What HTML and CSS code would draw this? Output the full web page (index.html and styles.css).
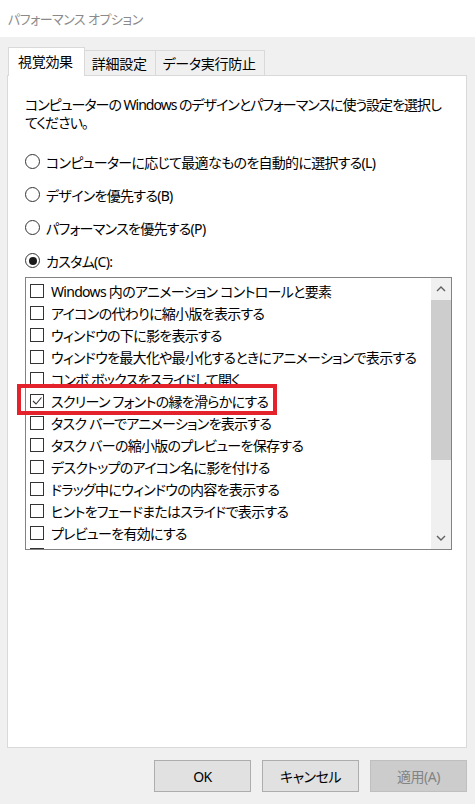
FILE: index.html
```html
<!DOCTYPE html>
<html lang="ja">
<head>
    <meta charset="UTF-8">
    <meta name="viewport" content="width=device-width, initial-scale=1.0">
    <title>パフォーマンス オプション</title>
    <link rel="stylesheet" href="styles.css">
</head>
<body>
    <div class="window">
        <div class="titlebar">パフォーマンス オプション</div>

        <!-- Pestañas -->
        <div class="tabs">
            <div class="tab active">視覚効果</div>
            <div class="tab">詳細設定</div>
            <div class="tab">データ実行防止</div>
        </div>

        <div class="panel">
            <p class="intro">コンピューターの Windows のデザインとパフォーマンスに使う設定を選択し<br>てください。</p>

            <div class="radio-group">
                <div class="radio"><span class="circle"></span>コンピューターに応じて最適なものを自動的に選択する(L)</div>
                <div class="radio"><span class="circle"></span>デザインを優先する(B)</div>
                <div class="radio"><span class="circle"></span>パフォーマンスを優先する(P)</div>
                <div class="radio"><span class="circle checked"></span>カスタム(C):</div>
            </div>

            <div class="listbox">
                <ul class="items">
                    <li><span class="box"></span>Windows 内のアニメーション コントロールと要素</li>
                    <li><span class="box"></span>アイコンの代わりに縮小版を表示する</li>
                    <li><span class="box"></span>ウィンドウの下に影を表示する</li>
                    <li><span class="box"></span>ウィンドウを最大化や最小化するときにアニメーションで表示する</li>
                    <li><span class="box"></span>コンボ ボックスをスライドして開く</li>
                    <li><span class="box">
                        <svg width="12" height="12" viewBox="0 0 12 12"><polyline points="2,6 5,9 10.5,2.5" fill="none" stroke="#333" stroke-width="1.1"/></svg>
                    </span>スクリーン フォントの縁を滑らかにする</li>
                    <li><span class="box"></span>タスク バーでアニメーションを表示する</li>
                    <li><span class="box"></span>タスク バーの縮小版のプレビューを保存する</li>
                    <li><span class="box"></span>デスクトップのアイコン名に影を付ける</li>
                    <li><span class="box"></span>ドラッグ中にウィンドウの内容を表示する</li>
                    <li><span class="box"></span>ヒントをフェードまたはスライドで表示する</li>
                    <li><span class="box"></span>プレビューを有効にする</li>
                    <li><span class="box"></span>マウス ポインターの下に影を表示する</li>
                </ul>
                <div class="scrollbar">
                    <div class="arrow">
                        <svg width="10" height="6" viewBox="0 0 10 6"><polyline points="1,5 5,1 9,5" fill="none" stroke="#606060" stroke-width="1.4"/></svg>
                    </div>
                    <div class="thumb"></div>
                    <div class="track"></div>
                    <div class="arrow">
                        <svg width="10" height="6" viewBox="0 0 10 6"><polyline points="1,1 5,5 9,1" fill="none" stroke="#606060" stroke-width="1.4"/></svg>
                    </div>
                </div>
            </div>

            <!-- Marco rojo de resaltado -->
            <div class="highlight"></div>
        </div>

        <div class="buttons">
            <button>OK</button>
            <button>キャンセル</button>
            <button class="disabled">適用(A)</button>
        </div>
    </div>
</body>
</html>
```

FILE: styles.css
```css
/* Ventana de diálogo estilo Windows */
body {
    margin: 0;
    background-color: #f0f0f0;
    font-family: "Noto Sans", "Noto Sans CJK JP", sans-serif;
    font-size: 14px;
    letter-spacing: -0.7px;
    color: #000000;
    font-feature-settings: "palt";
}

.window {
    width: 475px;
    height: 804px;
    display: flex;
    flex-direction: column;
}

/* Barra de título */
.titlebar {
    height: 37px;
    padding-left: 8px;
    display: flex;
    align-items: center;
    background-color: #ffffff;
    color: #8a8a8a;
    font-size: 13px;
    letter-spacing: -0.5px;
    box-sizing: border-box;
}

/* Pestañas */
.tabs {
    height: 38px;
    padding-left: 8px;
    display: flex;
    align-items: flex-end;
}
.tab {
    height: 25px;
    padding: 0 8px 0 7px;
    display: flex;
    align-items: center;
    background-color: #f0f0f0;
    border: 1px solid #d9d9d9;
    border-bottom: none;
    border-left: none;
    box-sizing: border-box;
    letter-spacing: -0.3px;
}
.tab.active {
    height: 29px;
    margin-bottom: -1px;
    padding: 0 11px 2px 9px;
    background-color: #ffffff;
    border-left: 1px solid #d9d9d9;
    position: relative;
    z-index: 1;
}

/* Panel principal */
.panel {
    position: relative;
    height: 673px;
    margin: 0 8px 0 7px;
    padding: 20px 0 0 17px;
    background-color: #ffffff;
    border: 1px solid #d9d9d9;
    box-sizing: border-box;
}
.intro {
    margin: 0;
    line-height: 18px;
    letter-spacing: -1px;
    white-space: nowrap;
}

/* Botones de opción */
.radio-group {
    margin-top: 13px;
}
.radio {
    height: 33px;
    display: flex;
    align-items: center;
    gap: 6px;
}
.circle {
    width: 15px;
    height: 15px;
    border: 1px solid #333333;
    border-radius: 50%;
    box-sizing: border-box;
    display: flex;
    align-items: center;
    justify-content: center;
}
.circle.checked::after {
    content: "";
    width: 8px;
    height: 8px;
    border-radius: 50%;
    background-color: #1a1a1a;
}

/* Lista de casillas */
.listbox {
    width: 427px;
    height: 273px;
    display: flex;
    border: 1px solid #828282;
    box-sizing: border-box;
}
.items {
    flex: 1;
    margin: 0;
    padding: 2px 0 0 4px;
    list-style: none;
    overflow: hidden;
}
.items li {
    height: 22px;
    display: flex;
    align-items: center;
    gap: 7px;
    white-space: nowrap;
}
.box {
    width: 14px;
    height: 14px;
    flex-shrink: 0;
    border: 1px solid #333333;
    box-sizing: border-box;
    display: flex;
    align-items: center;
    justify-content: center;
}

/* Barra de desplazamiento */
.scrollbar {
    width: 20px;
    display: flex;
    flex-direction: column;
    background-color: #f0f0f0;
}
.arrow {
    height: 22px;
    display: flex;
    align-items: center;
    justify-content: center;
}
.thumb {
    height: 160px;
    background-color: #cdcdcd;
}
.track {
    flex: 1;
}

/* Marco rojo */
.highlight {
    position: absolute;
    left: 9px;
    top: 308px;
    width: 260px;
    height: 31px;
    border: 4px solid #e4222c;
    box-sizing: border-box;
}

/* Botones inferiores */
.buttons {
    display: flex;
    justify-content: flex-end;
    gap: 11px;
    padding: 12px 8px 0 0;
}
button {
    width: 97px;
    height: 32px;
    font-family: inherit;
    font-size: 14px;
    letter-spacing: -0.5px;
    font-feature-settings: "palt";
    color: #000000;
    background-color: #e1e1e1;
    border: 1px solid #adadad;
}
button.disabled {
    color: #838383;
    background-color: #cccccc;
    border-color: #bfbfbf;
}
```
